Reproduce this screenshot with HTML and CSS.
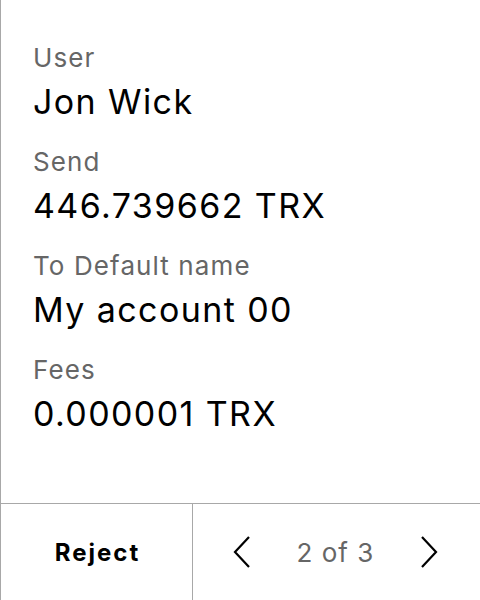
FILE: index.html
```html
<!DOCTYPE html>
<html>
<head>
<meta charset="utf-8">
<link rel="stylesheet" href="styles.css">
</head>
<body>
<div class="screen">
  <div class="content">
    <div class="item">
      <div class="label">User</div>
      <div class="value">Jon Wick</div>
    </div>
    <div class="item">
      <div class="label">Send</div>
      <div class="value">446.739662 TRX</div>
    </div>
    <div class="item">
      <div class="label">To Default name</div>
      <div class="value">My account 00</div>
    </div>
    <div class="item">
      <div class="label">Fees</div>
      <div class="value">0.000001 TRX</div>
    </div>
  </div>
  <div class="footer">
    <div class="reject">Reject</div>
    <div class="nav">
      <svg class="chev" width="18" height="34" viewBox="0 0 18 34"><polyline points="16,2 2,17 16,32" fill="none" stroke="#000" stroke-width="2.2"/></svg>
      <span class="page">2 of 3</span>
      <svg class="chev" width="18" height="34" viewBox="0 0 18 34"><polyline points="2,2 16,17 2,32" fill="none" stroke="#000" stroke-width="2.2"/></svg>
    </div>
  </div>
</div>
</body>
</html>
```
FILE: styles.css
```css
html, body {
  margin: 0;
  padding: 0;
  background: #fff;
}
.screen {
  width: 480px;
  height: 600px;
  box-sizing: border-box;
  border-left: 1px solid #a8a8a8;
  display: flex;
  flex-direction: column;
  font-family: Inter, "Noto Sans", sans-serif;
}
.content {
  flex: 1;
  padding: 40px 0 0 32px;
  display: flex;
  flex-direction: column;
  gap: 16px;
}
.label {
  font-size: 26px;
  line-height: 36px;
  letter-spacing: 1.1px;
  color: #666;
}
.value {
  font-size: 34px;
  line-height: 52px;
  letter-spacing: 1.4px;
  color: #000;
}
.footer {
  height: 96px;
  border-top: 1px solid #a8a8a8;
  display: flex;
}
.reject {
  width: 192px;
  box-sizing: border-box;
  padding-left: 2px;
  border-right: 1px solid #a8a8a8;
  display: flex;
  align-items: center;
  justify-content: center;
  font-size: 24px;
  font-weight: 700;
  letter-spacing: 2px;
  color: #000;
}
.nav {
  flex: 1;
  display: flex;
  align-items: center;
  justify-content: space-between;
  padding: 0 42px 0 40px;
}
.page {
  font-size: 26px;
  letter-spacing: 1px;
  color: #666;
}
.chev {
  display: block;
}
```
